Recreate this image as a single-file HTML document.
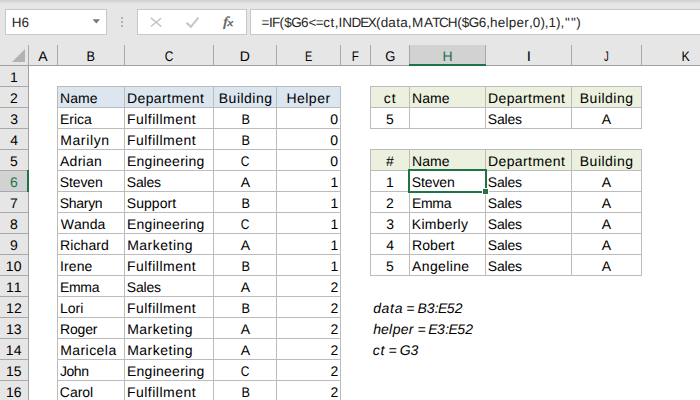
<!DOCTYPE html>
<html lang="en">
<head>
<meta charset="utf-8">
<title>Excel - INDEX and MATCH with helper column</title>
<style>
*{box-sizing:border-box;margin:0;padding:0}
html,body{width:700px;height:400px;overflow:hidden;background:#fff}
body{font-kerning:none;text-rendering:geometricPrecision;font-family:"Liberation Sans",sans-serif;font-size:14px;color:#000;position:relative}
#app{position:absolute;left:0;top:0;width:700px;height:400px;overflow:hidden;background:#fff}
#bar{position:absolute;left:0;top:0;width:700px;height:44px;background:#e6e6e6}
#bar .shade{position:absolute;left:0;top:0;width:700px;height:4px;background:linear-gradient(#d0d0d0,#e6e6e6)}
.box{position:absolute;top:9px;height:26px;background:#fff;border:1px solid #c8c8c8}
#namebox{left:5px;width:102px}
#fxbox{left:137px;width:110px}
#fbox{left:250px;width:460px}
.b{font-size:13.5px;color:#262626}
.ft{position:absolute;left:0;top:0;overflow:visible}
.ft text{font-size:13.5px;fill:#262626;white-space:pre}
.note{position:absolute;width:130px;height:20px}
.nt{position:absolute;left:0;top:0;overflow:visible}
.nt text{font-size:14px;font-style:italic;fill:#000;white-space:pre}
.fx{position:absolute;left:84.5px;top:0;height:24px;line-height:24px;white-space:nowrap;font-family:"Liberation Serif",serif;font-style:italic;font-size:10.5px;letter-spacing:-0.4px;color:#5e5e5e;-webkit-text-stroke:0.3px #5e5e5e;transform:scaleX(1.28);transform-origin:0 50%}
.fx::first-letter{font-size:13.5px}
#colhdr{position:absolute;left:0;top:44px;width:700px;height:22px;background:#e6e6e6;border-bottom:1px solid #a0a0a0}
.chsel{position:absolute;top:1px;height:20px;background:#d2d2d2}
.chg{position:absolute;top:20px;height:2px;background:#217346;z-index:2}
.g{color:#217346}
.chl{position:absolute;top:1px;width:1px;height:20px;background:#a8a8a8}
#rowhdr{position:absolute;left:0;top:0;width:29px;height:400px;background:#e6e6e6;border-right:1px solid #a0a0a0}
.rhsel{position:absolute;left:0;width:27px;height:20px;background:#d2d2d2}
.rhg{position:absolute;left:27px;width:2px;height:22px;background:#217346;z-index:2}
.rhl{position:absolute;left:0;width:28px;height:1px;background:#a8a8a8}
#grid{position:absolute;left:0;top:0;width:700px;height:400px}
.t{position:absolute;line-height:21px;height:21px;white-space:nowrap}
.it{font-style:italic}
.hl{position:absolute;height:1px;background:#bcbcbc}
.vl{position:absolute;width:1px;background:#bcbcbc}
.hb{position:absolute;background:#dce6f1}
.hg{position:absolute;background:#ebf1de}
#selbox{position:absolute;left:408px;top:169px;width:79px;height:24px;border:2px solid #217346}
#selhandle{position:absolute;left:482px;top:188px;width:5px;height:5px;background:#217346;border:1px solid #fff;box-sizing:content-box}
</style>
</head>
<body>
<div id="app">
<div id="grid">
<div class="hb" style="left:57px;top:86px;width:283px;height:21px"></div>
<div class="hl" style="left:57px;top:86px;width:284px"></div>
<div class="hl" style="left:57px;top:107px;width:284px"></div>
<div class="hl" style="left:57px;top:128px;width:284px"></div>
<div class="hl" style="left:57px;top:149px;width:284px"></div>
<div class="hl" style="left:57px;top:170px;width:284px"></div>
<div class="hl" style="left:57px;top:191px;width:284px"></div>
<div class="hl" style="left:57px;top:212px;width:284px"></div>
<div class="hl" style="left:57px;top:233px;width:284px"></div>
<div class="hl" style="left:57px;top:254px;width:284px"></div>
<div class="hl" style="left:57px;top:275px;width:284px"></div>
<div class="hl" style="left:57px;top:296px;width:284px"></div>
<div class="hl" style="left:57px;top:317px;width:284px"></div>
<div class="hl" style="left:57px;top:338px;width:284px"></div>
<div class="hl" style="left:57px;top:359px;width:284px"></div>
<div class="hl" style="left:57px;top:380px;width:284px"></div>
<div class="hl" style="left:57px;top:401px;width:284px"></div>
<div class="vl" style="left:57px;top:86px;height:316px"></div>
<div class="vl" style="left:124px;top:86px;height:316px"></div>
<div class="vl" style="left:213px;top:86px;height:316px"></div>
<div class="vl" style="left:276px;top:86px;height:316px"></div>
<div class="vl" style="left:340px;top:86px;height:316px"></div>
<div class="t" style="left:59.99px;top:88px;letter-spacing:0.049px;">Name</div>
<div class="t" style="left:126.92px;top:88px;letter-spacing:0.416px;">Department</div>
<div class="t" style="left:218.82px;top:88px;letter-spacing:0.472px;">Building</div>
<div class="t" style="left:286.41px;top:88px;letter-spacing:0.484px;">Helper</div>
<div class="t" style="left:59.97px;top:109px;letter-spacing:-0.033px;">Erica</div>
<div class="t" style="left:126.91px;top:109px;letter-spacing:0.486px;">Fulfillment</div>
<div class="t" style="left:240.63px;top:109px;transform:scaleX(0.910);transform-origin:4.87px 50%;">B</div>
<div class="t" style="left:330.26px;top:109px;">0</div>
<div class="t" style="left:60.14px;top:130px;letter-spacing:0.638px;">Marilyn</div>
<div class="t" style="left:126.91px;top:130px;letter-spacing:0.486px;">Fulfillment</div>
<div class="t" style="left:240.63px;top:130px;transform:scaleX(0.910);transform-origin:4.87px 50%;">B</div>
<div class="t" style="left:330.26px;top:130px;">0</div>
<div class="t" style="left:60.03px;top:151px;letter-spacing:0.252px;">Adrian</div>
<div class="t" style="left:126.97px;top:151px;letter-spacing:0.257px;">Engineering</div>
<div class="t" style="left:240.36px;top:151px;transform:scaleX(0.854);transform-origin:5.14px 50%;">C</div>
<div class="t" style="left:330.26px;top:151px;">0</div>
<div class="t" style="left:59.79px;top:172px;letter-spacing:-0.130px;">Steven</div>
<div class="t" style="left:126.79px;top:172px;letter-spacing:-0.210px;">Sales</div>
<div class="t" style="left:240.83px;top:172px;">A</div>
<div class="t" style="left:330.40px;top:172px;">1</div>
<div class="t" style="left:59.79px;top:193px;letter-spacing:-0.299px;">Sharyn</div>
<div class="t" style="left:126.79px;top:193px;letter-spacing:0.056px;">Support</div>
<div class="t" style="left:240.63px;top:193px;transform:scaleX(0.910);transform-origin:4.87px 50%;">B</div>
<div class="t" style="left:330.40px;top:193px;">1</div>
<div class="t" style="left:60.73px;top:214px;letter-spacing:0.048px;">Wanda</div>
<div class="t" style="left:126.97px;top:214px;letter-spacing:0.257px;">Engineering</div>
<div class="t" style="left:240.36px;top:214px;transform:scaleX(0.854);transform-origin:5.14px 50%;">C</div>
<div class="t" style="left:330.40px;top:214px;">1</div>
<div class="t" style="left:59.98px;top:235px;letter-spacing:0.114px;">Richard</div>
<div class="t" style="left:127.14px;top:235px;letter-spacing:0.500px;">Marketing</div>
<div class="t" style="left:240.83px;top:235px;">A</div>
<div class="t" style="left:330.40px;top:235px;">1</div>
<div class="t" style="left:59.99px;top:256px;letter-spacing:0.114px;">Irene</div>
<div class="t" style="left:126.91px;top:256px;letter-spacing:0.486px;">Fulfillment</div>
<div class="t" style="left:240.63px;top:256px;transform:scaleX(0.910);transform-origin:4.87px 50%;">B</div>
<div class="t" style="left:330.40px;top:256px;">1</div>
<div class="t" style="left:59.97px;top:277px;letter-spacing:-0.329px;">Emma</div>
<div class="t" style="left:126.79px;top:277px;letter-spacing:-0.210px;">Sales</div>
<div class="t" style="left:240.83px;top:277px;">A</div>
<div class="t" style="left:330.42px;top:277px;">2</div>
<div class="t" style="left:59.91px;top:298px;letter-spacing:0.050px;">Lori</div>
<div class="t" style="left:126.91px;top:298px;letter-spacing:0.486px;">Fulfillment</div>
<div class="t" style="left:240.63px;top:298px;transform:scaleX(0.910);transform-origin:4.87px 50%;">B</div>
<div class="t" style="left:330.42px;top:298px;">2</div>
<div class="t" style="left:59.98px;top:319px;letter-spacing:-0.147px;">Roger</div>
<div class="t" style="left:127.14px;top:319px;letter-spacing:0.500px;">Marketing</div>
<div class="t" style="left:240.83px;top:319px;">A</div>
<div class="t" style="left:330.42px;top:319px;">2</div>
<div class="t" style="left:60.14px;top:340px;letter-spacing:0.452px;">Maricela</div>
<div class="t" style="left:127.14px;top:340px;letter-spacing:0.500px;">Marketing</div>
<div class="t" style="left:240.83px;top:340px;">A</div>
<div class="t" style="left:330.42px;top:340px;">2</div>
<div class="t" style="left:60.04px;top:361px;letter-spacing:-0.492px;">John</div>
<div class="t" style="left:126.97px;top:361px;letter-spacing:0.257px;">Engineering</div>
<div class="t" style="left:240.36px;top:361px;transform:scaleX(0.854);transform-origin:5.14px 50%;">C</div>
<div class="t" style="left:330.42px;top:361px;">2</div>
<div class="t" style="left:59.80px;top:382px;letter-spacing:-0.025px;">Carol</div>
<div class="t" style="left:126.91px;top:382px;letter-spacing:0.486px;">Fulfillment</div>
<div class="t" style="left:240.63px;top:382px;transform:scaleX(0.910);transform-origin:4.87px 50%;">B</div>
<div class="t" style="left:330.42px;top:382px;">2</div>
<div class="hg" style="left:370px;top:86px;width:271px;height:21px"></div>
<div class="hl" style="left:370px;top:86px;width:272px"></div>
<div class="hl" style="left:370px;top:107px;width:272px"></div>
<div class="hl" style="left:370px;top:128px;width:272px"></div>
<div class="vl" style="left:370px;top:86px;height:43px"></div>
<div class="vl" style="left:409px;top:86px;height:43px"></div>
<div class="vl" style="left:485px;top:86px;height:43px"></div>
<div class="vl" style="left:571px;top:86px;height:43px"></div>
<div class="vl" style="left:641px;top:86px;height:43px"></div>
<div class="t" style="left:383.84px;top:88px;letter-spacing:0.936px;">ct</div>
<div class="t" style="left:411.99px;top:88px;letter-spacing:0.049px;">Name</div>
<div class="t" style="left:487.92px;top:88px;letter-spacing:0.416px;">Department</div>
<div class="t" style="left:579.82px;top:88px;letter-spacing:0.472px;">Building</div>
<div class="t" style="left:386.12px;top:109px;">5</div>
<div class="t" style="left:487.79px;top:109px;letter-spacing:-0.210px;">Sales</div>
<div class="t" style="left:601.83px;top:109px;">A</div>
<div class="hg" style="left:370px;top:149px;width:271px;height:21px"></div>
<div class="hl" style="left:370px;top:149px;width:272px"></div>
<div class="hl" style="left:370px;top:170px;width:272px"></div>
<div class="hl" style="left:370px;top:191px;width:272px"></div>
<div class="hl" style="left:370px;top:212px;width:272px"></div>
<div class="hl" style="left:370px;top:233px;width:272px"></div>
<div class="hl" style="left:370px;top:254px;width:272px"></div>
<div class="hl" style="left:370px;top:275px;width:272px"></div>
<div class="vl" style="left:370px;top:149px;height:127px"></div>
<div class="vl" style="left:409px;top:149px;height:127px"></div>
<div class="vl" style="left:485px;top:149px;height:127px"></div>
<div class="vl" style="left:571px;top:149px;height:127px"></div>
<div class="vl" style="left:641px;top:149px;height:127px"></div>
<div class="t" style="left:386.11px;top:151px;">#</div>
<div class="t" style="left:411.99px;top:151px;letter-spacing:0.049px;">Name</div>
<div class="t" style="left:487.92px;top:151px;letter-spacing:0.416px;">Department</div>
<div class="t" style="left:579.82px;top:151px;letter-spacing:0.472px;">Building</div>
<div class="t" style="left:385.92px;top:172px;">1</div>
<div class="t" style="left:411.79px;top:172px;letter-spacing:-0.130px;">Steven</div>
<div class="t" style="left:487.79px;top:172px;letter-spacing:-0.210px;">Sales</div>
<div class="t" style="left:601.83px;top:172px;">A</div>
<div class="t" style="left:386.11px;top:193px;">2</div>
<div class="t" style="left:411.97px;top:193px;letter-spacing:-0.329px;">Emma</div>
<div class="t" style="left:487.79px;top:193px;letter-spacing:-0.210px;">Sales</div>
<div class="t" style="left:601.83px;top:193px;">A</div>
<div class="t" style="left:386.15px;top:214px;">3</div>
<div class="t" style="left:411.81px;top:214px;letter-spacing:0.241px;">Kimberly</div>
<div class="t" style="left:487.79px;top:214px;letter-spacing:-0.210px;">Sales</div>
<div class="t" style="left:601.83px;top:214px;">A</div>
<div class="t" style="left:386.15px;top:235px;">4</div>
<div class="t" style="left:411.98px;top:235px;letter-spacing:0.092px;">Robert</div>
<div class="t" style="left:487.79px;top:235px;letter-spacing:-0.210px;">Sales</div>
<div class="t" style="left:601.83px;top:235px;">A</div>
<div class="t" style="left:386.12px;top:256px;">5</div>
<div class="t" style="left:412.03px;top:256px;letter-spacing:0.373px;">Angeline</div>
<div class="t" style="left:487.79px;top:256px;letter-spacing:-0.210px;">Sales</div>
<div class="t" style="left:601.83px;top:256px;">A</div>
<div class="note" style="left:371px;top:297px"><svg class="nt" width="130" height="20" viewBox="0 0 130 20"><text x="2.2 10.4 19.0 23.8 31.7 35.3 43.2 46.6 55.7 63.8 67.1 75.7 83.8" y="16">data = B3:E52</text></svg></div>
<div class="note" style="left:371px;top:318px"><svg class="nt" width="130" height="20" viewBox="0 0 130 20"><text x="2.2 10.1 18.1 21.7 29.7 37.8 42.7 46.4 54.3 57.3 66.0 74.2 77.5 86.2 94.3" y="16">helper = E3:E52</text></svg></div>
<div class="note" style="left:371px;top:339px"><svg class="nt" width="130" height="20" viewBox="0 0 130 20"><text x="1.8 9.4 13.9 17.5 25.5 28.8 39.5" y="16">ct = G3</text></svg></div>
<div id="selbox"></div>
<div id="selhandle"></div>
</div>
<div id="rowhdr">
<div class="rhl" style="top:86px"></div>
<div class="t" style="left:9.92px;top:67px;">1</div>
<div class="rhl" style="top:107px"></div>
<div class="t" style="left:10.11px;top:88px;">2</div>
<div class="rhl" style="top:128px"></div>
<div class="t" style="left:10.15px;top:109px;">3</div>
<div class="rhl" style="top:149px"></div>
<div class="t" style="left:10.15px;top:130px;">4</div>
<div class="rhl" style="top:170px"></div>
<div class="t" style="left:10.12px;top:151px;">5</div>
<div class="rhsel" style="top:171px"></div>
<div class="rhg" style="top:170px"></div>
<div class="rhl" style="top:191px"></div>
<div class="t g" style="left:10.06px;top:172px;">6</div>
<div class="rhl" style="top:212px"></div>
<div class="t" style="left:10.10px;top:193px;">7</div>
<div class="rhl" style="top:233px"></div>
<div class="t" style="left:10.11px;top:214px;">8</div>
<div class="rhl" style="top:254px"></div>
<div class="t" style="left:10.11px;top:235px;">9</div>
<div class="rhl" style="top:275px"></div>
<div class="t" style="left:5.84px;top:256px;letter-spacing:0.238px;">10</div>
<div class="rhl" style="top:296px"></div>
<div class="t" style="left:5.99px;top:277px;letter-spacing:0.074px;">11</div>
<div class="rhl" style="top:317px"></div>
<div class="t" style="left:5.97px;top:298px;letter-spacing:0.133px;">12</div>
<div class="rhl" style="top:338px"></div>
<div class="t" style="left:5.93px;top:319px;letter-spacing:0.114px;">13</div>
<div class="rhl" style="top:359px"></div>
<div class="t" style="left:5.76px;top:340px;letter-spacing:0.247px;">14</div>
<div class="rhl" style="top:380px"></div>
<div class="t" style="left:6.10px;top:361px;letter-spacing:-0.244px;">15</div>
<div class="rhl" style="top:401px"></div>
<div class="t" style="left:5.90px;top:382px;letter-spacing:0.167px;">16</div>
</div>
<div id="bar">
<div class="shade"></div>
<div class="box" id="namebox"><div class="t b" style="left:5.87px;top:2px;letter-spacing:-0.154px;">H6</div>
<svg style="position:absolute;left:86px;top:8.5px" width="9" height="6" viewBox="0 0 9 6"><path d="M0.6 0.3h7.4L4.3 4.6z" fill="#777"/></svg></div>
<svg style="position:absolute;left:120px;top:16px" width="4" height="12" viewBox="0 0 4 12"><rect x="1" y="1" width="2" height="2" fill="#b0b0b0"/><rect x="1" y="5" width="2" height="2" fill="#b0b0b0"/><rect x="1" y="9" width="2" height="2" fill="#b0b0b0"/></svg>
<div class="box" id="fxbox">
<svg style="position:absolute;left:0;top:0" width="108" height="24" viewBox="138 10 108 24"><path d="M150.9 17.9L161.3 26.5M161.1 18.3L150.9 26.5" stroke="#c2c2c2" stroke-width="1.4" fill="none"/><path d="M186.6 22.9L190.9 26.8L198.4 17.6" stroke="#c6c6c6" stroke-width="2.1" fill="none"/></svg>
<div class="fx">fx</div>
</div>
<div class="box" id="fbox"><svg class="ft" width="449" height="24" viewBox="0 0 449 24"><text x="10.4 18.0 21.1 28.6 33.2 40.2 50.1 57.4 64.8 72.3 79.4 83.8 87.5 91.2 100.6 109.2 116.7 125.1 129.7 137.2 145.2 149.3 156.7 161.1 172.9 181.3 188.1 196.7 206.2 210.8 217.8 227.7 235.2 239.1 246.8 254.4 257.8 265.4 273.2 278.1 281.8 289.4 293.8 297.6 305.1 309.6 314.0 319.9 325.3" y="17">=IF($G6&lt;=ct,INDEX(data,MATCH($G6,helper,0),1),"")</text></svg></div>
</div>
<div id="colhdr">
<div style="position:absolute;left:28px;top:1px;width:1px;height:20px;background:#a8a8a8"></div>
<svg style="position:absolute;left:12px;top:5px" width="13" height="13" viewBox="0 0 13 13"><path d="M13 0V13H0z" fill="#b3b3b3"/></svg>
<div class="chl" style="left:57px"></div>
<div class="t" style="left:38.33px;top:2px;">A</div>
<div class="chl" style="left:124px"></div>
<div class="t" style="left:86.13px;top:2px;transform:scaleX(0.910);transform-origin:4.87px 50%;">B</div>
<div class="chl" style="left:213px"></div>
<div class="t" style="left:163.86px;top:2px;transform:scaleX(0.854);transform-origin:5.14px 50%;">C</div>
<div class="chl" style="left:276px"></div>
<div class="t" style="left:239.71px;top:2px;">D</div>
<div class="chl" style="left:340px"></div>
<div class="t" style="left:303.56px;top:2px;transform:scaleX(0.779);transform-origin:4.94px 50%;">E</div>
<div class="chl" style="left:370px"></div>
<div class="t" style="left:350.93px;top:2px;transform:scaleX(0.836);transform-origin:4.57px 50%;">F</div>
<div class="chl" style="left:409px"></div>
<div class="t" style="left:384.73px;top:2px;transform:scaleX(0.932);transform-origin:5.27px 50%;">G</div>
<div class="chsel" style="left:410px;width:75px"></div>
<div class="chg" style="left:409px;width:77px"></div>
<div class="chl" style="left:485px"></div>
<div class="t g" style="left:442.44px;top:2px;">H</div>
<div class="chl" style="left:571px"></div>
<div class="t" style="left:526.56px;top:2px;transform:scaleX(1.072);transform-origin:1.94px 50%;">I</div>
<div class="chl" style="left:641px"></div>
<div class="t" style="left:603.41px;top:2px;transform:scaleX(0.675);transform-origin:3.09px 50%;">J</div>
<div class="chl" style="left:731px"></div>
<div class="t" style="left:681.34px;top:2px;transform:scaleX(0.886);transform-origin:5.16px 50%;">K</div>
</div>
</div>
</body>
</html>
